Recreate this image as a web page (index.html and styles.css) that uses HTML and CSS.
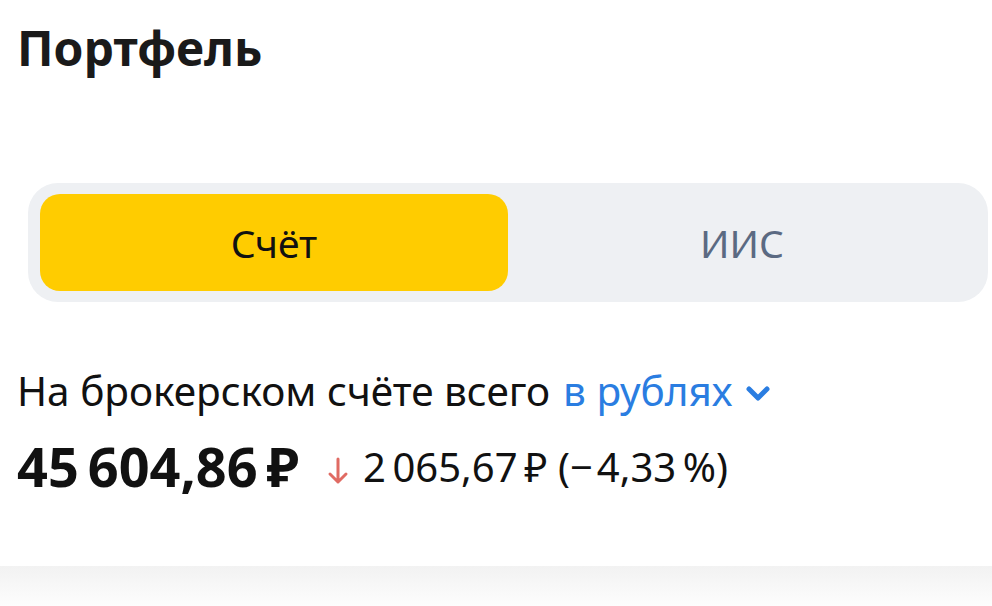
FILE: index.html
```html
<!DOCTYPE html>
<html lang="ru">
<head>
<meta charset="utf-8">
<link rel="stylesheet" href="styles.css">
</head>
<body>
<div class="page">
  <h1 class="title">Портфель</h1>
  <div class="segments">
    <div class="seg active">Счёт</div>
    <div class="seg">ИИС</div>
  </div>
  <div class="summary">
    <div class="label">На брокерском счёте всего <span class="currency">в рублях<svg class="chev" viewBox="0 0 24 16" width="24" height="16"><path d="M3 3 L12 12 L21 3" fill="none" stroke="#2a7de1" stroke-width="5" stroke-linecap="round" stroke-linejoin="round"/></svg></span></div>
    <div class="totals">
      <span class="total">45&#8239;604,86&#8239;₽</span>
      <svg class="arrow" viewBox="0 0 22 28" width="22" height="28"><path d="M11 2 V25 M3 17 L11 25 L19 17" fill="none" stroke="#e06b63" stroke-width="3" stroke-linecap="round" stroke-linejoin="round"/></svg>
      <span class="change">2&#8239;065,67&#8239;₽ (−&#8202;4,33&#8239;%)</span>
    </div>
  </div>
  <div class="footer-shade"></div>
</div>
</body>
</html>
```
FILE: styles.css
```css
* { box-sizing: border-box; }
html, body { margin: 0; padding: 0; background: #fff; }
body { width: 992px; height: 606px; overflow: hidden; font-family: "Noto Sans", Roboto, sans-serif; color: #111; }
.page { display: flex; flex-direction: column; height: 606px; }
.title { margin: 0; padding: 19px 0 0 17px; font-size: 48px; font-weight: 700; line-height: 58px; color: #1a1a1a; letter-spacing: 0; }
.segments { margin: 106px 4px 0 28px; height: 119px; background: #eef0f3; border-radius: 30px; padding: 11px 12px; display: grid; grid-template-columns: 1fr 1fr; }
.seg { display: flex; align-items: center; justify-content: center; font-size: 39px; color: #5b6a82; border-radius: 20px; }
.seg.active { background: #ffcc00; color: #111; }
.summary { padding: 67px 0 0 17px; }
.label { font-size: 40.5px; line-height: 44px; color: #111; display: flex; align-items: center; white-space: nowrap; }
.currency { color: #2a7de1; margin-left: 13px; display: inline-flex; align-items: center; }
.chev { margin-left: 13px; margin-top: 6px; }
.totals { display: flex; align-items: center; margin-top: 23px; height: 60px; white-space: nowrap; }
.total { font-size: 54px; font-weight: 700; color: #111; letter-spacing: -1px; }
.arrow { margin-left: 28px; margin-top: 10px; }
.change { font-size: 40px; margin-left: 14px; color: #111; }
.footer-shade { margin-top: auto; height: 40px; background: linear-gradient(#f2f2f2, #fdfdfd); }
```
